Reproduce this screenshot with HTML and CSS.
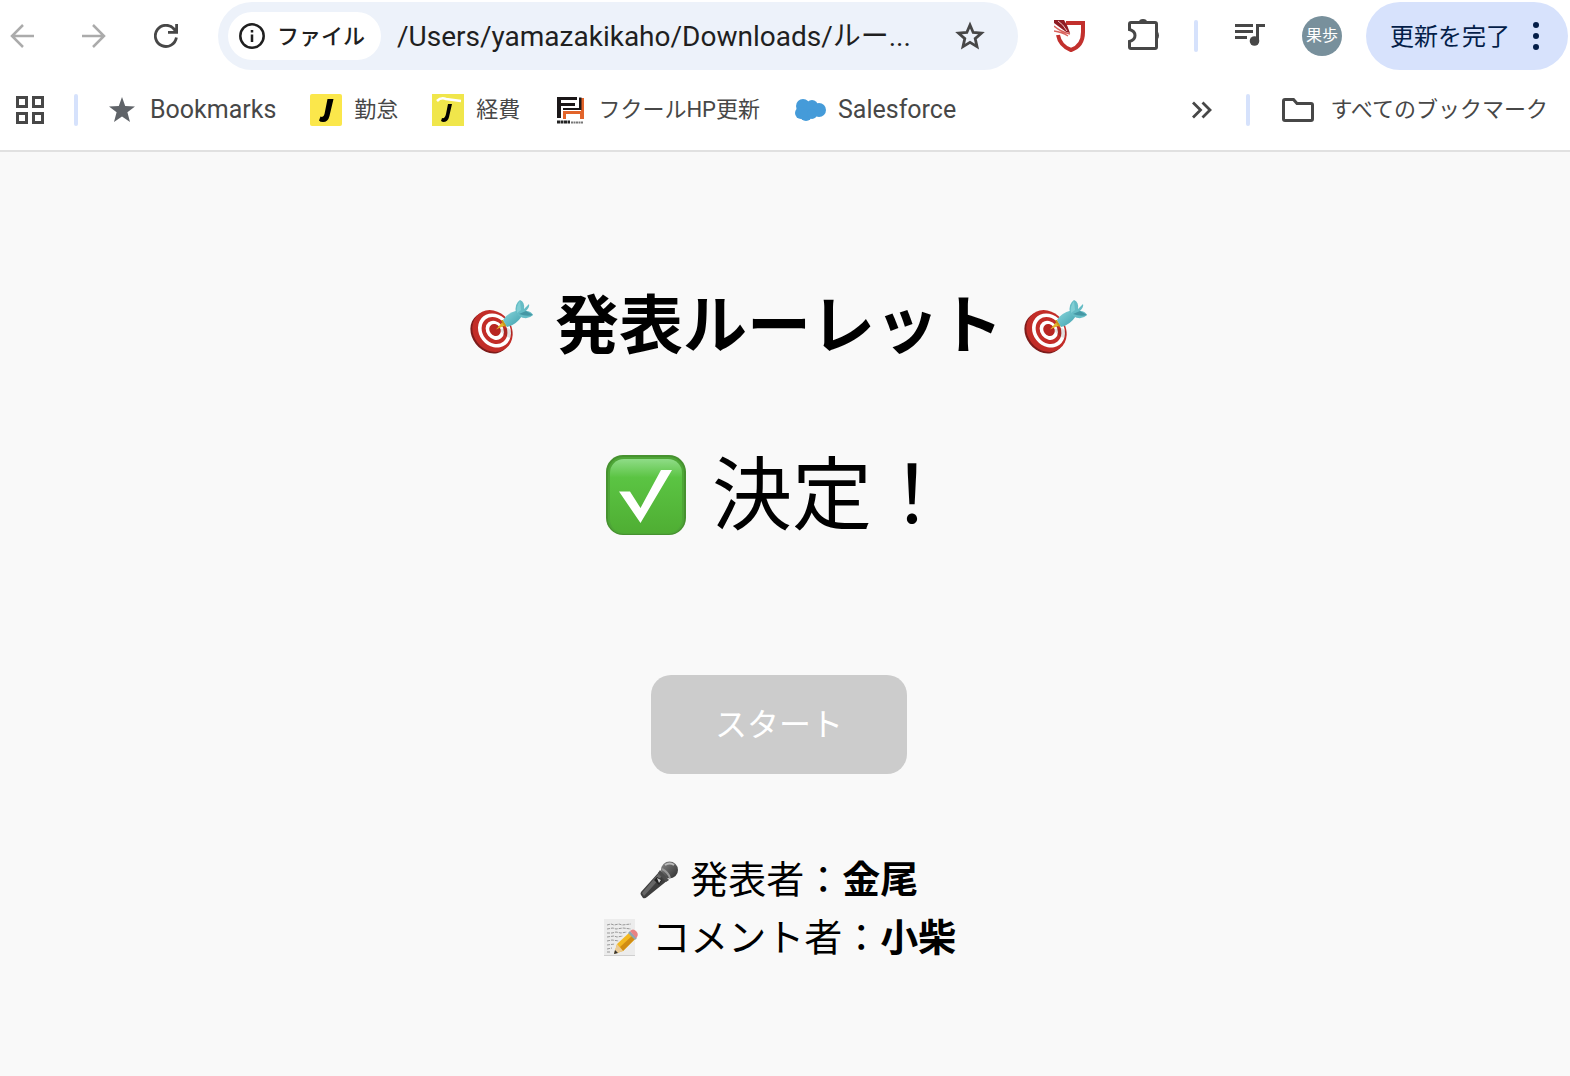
FILE: index.html
```html
<!DOCTYPE html>
<html lang="ja">
<head>
    <meta charset="UTF-8">
    <meta name="viewport" content="width=device-width, initial-scale=1.0">
    <title>発表ルーレット</title>
    <link rel="stylesheet" href="styles.css">
</head>
<body>
    <svg class="defs" aria-hidden="true">
        <defs>
            <linearGradient id="green" x1="0" y1="0" x2="0" y2="1">
                <stop offset="0" stop-color="#8fdc87"/>
                <stop offset="0.25" stop-color="#5bc443"/>
                <stop offset="1" stop-color="#4fae33"/>
            </linearGradient>
            <linearGradient id="metal" x1="0" y1="0" x2="1" y2="1">
                <stop offset="0" stop-color="#8a8a8a"/>
                <stop offset="1" stop-color="#2c2c2c"/>
            </linearGradient>
            <linearGradient id="dart" x1="0" y1="0" x2="1" y2="1">
                <stop offset="0" stop-color="#8ad6dc"/>
                <stop offset="1" stop-color="#3d9fac"/>
            </linearGradient>
            <symbol id="target" viewBox="0 0 64 64">
                <ellipse cx="20" cy="39" rx="18" ry="22" transform="rotate(-38 20 39)" fill="#7d1c1b"/>
                <ellipse cx="22.500" cy="37" rx="19" ry="22" transform="rotate(-38 22.500 37)" fill="#c22d28"/>
                <ellipse cx="24.500" cy="36.500" rx="15.500" ry="18" transform="rotate(-38 24.500 36.500)" fill="#fff"/>
                <ellipse cx="24.500" cy="36.500" rx="12" ry="14.200" transform="rotate(-38 24.500 36.500)" fill="#c22d28"/>
                <ellipse cx="24.800" cy="36.300" rx="8.500" ry="10.200" transform="rotate(-38 24.800 36.300)" fill="#fff"/>
                <ellipse cx="25" cy="36" rx="5.400" ry="6.400" transform="rotate(-38 25 36)" fill="#b82622"/>
                <path d="M29 35l9-1 5 4-3 6q-5-1-11-9z" fill="#000" opacity=".12"/>
                <path d="M26 35.500l6-7 3 3z" fill="#e2b52c"/>
                <path d="M31 26l2 0 4 6-2 1-2-3z" fill="#c99a1b"/>
                <path d="M33 26Q37 19 47 16.500L52 22Q46 31 37 33z" fill="url(#dart)"/>
                <path d="M46 19Q44 10 50 6q5 2 4 9l5-5q1 3-3 7 5 0 7 4-6 6-14 1z" fill="#65bcc5"/>
                <path d="M49 20l7-3 7 4q-6 2-14-1z" fill="#4597a4"/>
                <path d="M47 19q-1-7 3-12l1 9z" fill="#80ced4"/>
            </symbol>
            <symbol id="check" viewBox="0 0 80 80">
                <rect width="80" height="80" rx="17" fill="#46922f"/>
                <rect x="2" y="2" width="76" height="77" rx="15" fill="#4ea637"/>
                <rect x="4" y="4" width="72" height="74" rx="14" fill="url(#green)"/>
                <path d="M13 36.500H24L34.500 53 55 15H66L34.500 68z" fill="#fff"/>
            </symbol>
            <symbol id="mic" viewBox="0 0 38 38">
                <path d="M1 34Q0 33 1 31L19 11l9 8L7 36q-2 2-4 1z" fill="#3e3e3e"/>
                <path d="M2 32L19 12l3 3L4 35z" fill="#666"/>
                <path d="M14 19l3-3 5 3-3 5z" fill="#222"/>
                <path d="M17 17l4 2-2 3z" fill="#ccc"/>
                <circle cx="29.500" cy="9" r="8.500" fill="url(#metal)"/>
                <path d="M20 9l9 10-3 2-8-9z" fill="#4c4c4c"/>
                <path d="M22 8Q28 11 30 17" fill="none" stroke="#999" stroke-width="2"/>
                <path d="M25 4q5-3 9 0" fill="none" stroke="#bdbdbd" stroke-width="2"/>
            </symbol>
            <symbol id="memo" viewBox="0 0 38 38">
                <path d="M2 0H33V37H2z" fill="#cfcfcf"/>
                <path d="M2 0H33V36H2z" fill="#ececec"/>
                <path d="M5 6l4-1 3 1 5-1 3 1 9-1M5 10l6-1 3 1 7-1 8 1M5 14l5 0 4-1 5 1 6-1M5 18l7-1 3 1 6-1M5 22l5-1 7 1M5 26l8-1M5 30l5-1M5 33l4 0" fill="none" stroke="#999" stroke-dasharray="3 1"/>
                <path d="M12 35l3-10L28 13l6 6-13 13z" fill="#f2b822"/>
                <path d="M18 28L31 16l3 3-13 13z" fill="#d18d13"/>
                <path d="M12 35l3-10 6 7z" fill="#eacb98"/>
                <path d="M12 35l1-4 3 3z" fill="#333"/>
                <path d="M26 14l2-2 7 7-2 2z" fill="#8ea6b0"/>
                <path d="M28 12q3-3 6 0 3 3 1 6l-1 1z" fill="#e88283"/>
            </symbol>
        </defs>
    </svg>

    <header class="browser">
        <div class="toolbar">
            <nav class="nav">
                <button class="nav-btn" aria-label="戻る" disabled>
                    <svg width="24" height="24" viewBox="0 0 24 24" fill="none" stroke="#ababab" stroke-width="2.500"><path d="M24 12H2M13 1L2 12 13 23"/></svg>
                </button>
                <button class="nav-btn" aria-label="進む" disabled>
                    <svg width="24" height="24" viewBox="0 0 24 24" fill="none" stroke="#ababab" stroke-width="2.500"><path d="M0 12H22M11 1L22 12 11 23"/></svg>
                </button>
                <button class="nav-btn" aria-label="再読み込み">
                    <svg width="24" height="24" viewBox="0 0 24 24" fill="none" stroke="#474747" stroke-width="2.800"><path d="M22.400 13.500A10.600 10.600 0 1 1 20 5L22 8M22.600 0V8.400H14"/></svg>
                </button>
            </nav>

            <div class="omnibox">
                <button class="site-chip">
                    <svg width="26" height="26" viewBox="0 0 26 26" fill="none" stroke="#1f1f1f" stroke-width="2.500"><circle cx="13" cy="13" r="11.700"/><path d="M13 11.500V19M13 7V9.500"/></svg>
                    <span class="label">ファイル</span>
                </button>
                <input class="url" type="text" value="/Users/yamazakikaho/Downloads/ルー..." aria-label="アドレス" spellcheck="false">
                <button class="star-btn" aria-label="ブックマークに追加">
                    <svg width="30" height="30" viewBox="0 0 30 30" fill="none" stroke="#474747" stroke-width="2.800"><path d="M15 4L18.200 11.500 26.400 12.200 20.200 17.600 22 25.600 15 21.400 8 25.600 9.800 17.600 3.600 12.200 11.800 11.500z"/></svg>
                </button>
            </div>

            <div class="tools">
                <button class="tool-btn" aria-label="セキュリティ拡張機能">
                    <svg width="32" height="32" viewBox="0 0 32 32"><path d="M12 3H29V12Q29 26 17 30 6 26 4 15" fill="none" stroke="#c2302d" stroke-width="4"/><path d="M0 0H10Q14 6 16 13 11 12 8 9L0 3z" fill="#8f1d25"/><path d="M4 1Q9 4 13 11" fill="none" stroke="#f0c4c4"/><path d="M0 6Q7 12 16 14M0 11Q8 12 14 16" fill="none" stroke="#d9615b" stroke-width="1.500"/></svg>
                </button>
                <button class="tool-btn" aria-label="拡張機能">
                    <svg width="34" height="34" viewBox="-2 2 34 34"><path d="M4 5.500H28Q29.500 5.500 29.500 7V30Q29.500 31.500 28 31.500H4Q2.500 31.500 2.500 30V24.500Q8 23 8 18.500T2.500 12.500V7Q2.500 5.500 4 5.500z" fill="none" stroke="#474747" stroke-width="3"/><path d="M12 5Q12 2 16 2T20 5zM30 14Q32 15 32 18.500T30 23z" fill="#474747"/></svg>
                </button>
                <span class="divider"></span>
                <button class="tool-btn" aria-label="メディア">
                    <svg width="32" height="26" viewBox="0 0 32 26" fill="#474747"><path d="M1 1H19V4H1zM1 7H19V10H1zM1 13H13V16H1zM22 1H31V4H25V18H22z"/><circle cx="20.500" cy="18" r="4.800"/></svg>
                </button>
                <button class="tool-btn" aria-label="プロフィール"><span class="avatar">果歩</span></button>
            </div>

            <button class="update">
                <span class="label">更新を完了</span>
                <svg width="8" height="28" viewBox="0 0 8 28" fill="#041e49"><circle cx="4" cy="3" r="3"/><circle cx="4" cy="14" r="3"/><circle cx="4" cy="25" r="3"/></svg>
            </button>
        </div>

        <div class="bookmarks">
            <button class="apps" aria-label="アプリ">
                <svg width="28" height="28" viewBox="0 0 28 28" fill="none" stroke="#474747" stroke-width="3"><path d="M1.500 1.500H10.500V10.500H1.500zM17.500 1.500H26.500V10.500H17.500zM1.500 17.500H10.500V26.500H1.500zM17.500 17.500H26.500V26.500H17.500z"/></svg>
            </button>
            <span class="divider"></span>
            <div class="bookmark-list">
                <a class="bookmark latin" href="#">
                    <svg width="32" height="32" viewBox="0 0 32 32"><path d="M16 3L19.200 12 29 12.400 21.400 18.200 24 28 16 22.400 8 28 10.600 18.200 3 12.400 12.800 12z" fill="#5f6368"/></svg>
                    Bookmarks
                </a>
                <a class="bookmark" href="#">
                    <svg width="32" height="32" viewBox="0 0 32 32"><rect width="32" height="32" rx="2" fill="#fbe74b"/><path d="M17.500 5H23.500L19.500 22Q18 28 13 28 10 28 9 26.500L10.500 22.500Q13.500 24 14.500 20z" fill="#000"/></svg>
                    勤怠
                </a>
                <a class="bookmark" href="#">
                    <svg width="32" height="32" viewBox="0 0 32 32"><path d="M0 0H32V32H0z" fill="#f0e64b"/><path d="M5 7Q9 3 14 5L29 7" fill="none" stroke="#fff" stroke-width="2.500"/><path d="M16 10H20L17 23Q16 28 11 28L9 27 10 24Q13 25 14 20z" fill="#000"/></svg>
                    経費
                </a>
                <a class="bookmark" href="#">
                    <svg width="32" height="32" viewBox="0 0 32 32"><path d="M27 4H30V25H26V20H12V25H9V17H27z" fill="#e2642a"/><path d="M3 3H23V6H7V9H21V12H7V24H3z" fill="#1b1718"/><path d="M9 14H25V3.500H27.500V16H9z" fill="#1b1718"/><path d="M3 28H16" stroke="#222" stroke-width="3" stroke-dasharray="3 .5"/><path d="M17 28.500H29" stroke="#777" stroke-width="2" stroke-dasharray="2 .5"/></svg>
                    フクールHP更新
                </a>
                <a class="bookmark latin" href="#">
                    <svg width="32" height="32" viewBox="0 0 32 32" fill="#459bd9"><circle cx="9" cy="12" r="7"/><circle cx="18" cy="12" r="6"/><circle cx="25" cy="16" r="7"/><circle cx="7" cy="19" r="6"/><circle cx="12" cy="21" r="6"/><circle cx="18" cy="20" r="5"/></svg>
                    Salesforce
                </a>
            </div>
            <button class="more" aria-label="その他のブックマーク">
                <svg width="20" height="18" viewBox="0 0 20 18" fill="none" stroke="#474747" stroke-width="2.800"><path d="M1 1.500L8.500 9 1 16.500M10.500 1.500L18 9 10.500 16.500"/></svg>
            </button>
            <span class="divider"></span>
            <a class="bookmark all" href="#">
                <svg width="32" height="32" viewBox="0 0 32 32" fill="none" stroke="#474747" stroke-width="3"><path d="M3 5.500H11.500L15 9.500H29Q30.500 9.500 30.500 11V25Q30.500 26.500 29 26.500H3Q1.500 26.500 1.500 25V7Q1.500 5.500 3 5.500z"/></svg>
                すべてのブックマーク
            </a>
        </div>
    </header>

    <main class="page">
        <h1 class="title">
            <svg class="emoji" role="img" aria-label="的"><use href="#target"/></svg>
            発表ルーレット
            <svg class="emoji" role="img" aria-label="的"><use href="#target"/></svg>
        </h1>
        <div class="roulette">
            <svg class="emoji" role="img" aria-label="チェック"><use href="#check"/></svg>
            決定！
        </div>
        <button class="start" disabled>スタート</button>
        <div class="result">
            <p>
                <svg class="emoji" role="img" aria-label="マイク"><use href="#mic"/></svg>
                発表者：<strong>金尾</strong>
            </p>
            <p>
                <svg class="emoji" role="img" aria-label="メモ"><use href="#memo"/></svg>
                コメント者：<strong>小柴</strong>
            </p>
        </div>
    </main>
</body>
</html>
```
FILE: styles.css
```css
* {
    margin: 0;
    padding: 0;
    box-sizing: border-box;
}

body {
    font-family: Roboto, 'Noto Sans CJK JP', sans-serif;
    background: #f9f9f9;
    color: #000;
}

button {
    font: inherit;
    color: inherit;
    background: none;
    border: none;
}

svg {
    flex-shrink: 0;
}

.defs {
    position: absolute;
    width: 0;
    height: 0;
}

/* ブラウザ上部 */
.browser {
    background: #fff;
    border-bottom: 2px solid #e1e1e1;
}

.toolbar {
    display: flex;
    align-items: center;
    padding: 2px;
    padding-left: 0;
}

.nav {
    display: flex;
    gap: 28px;
    margin-right: 30px;
}

.nav-btn {
    display: flex;
    align-items: center;
    justify-content: center;
    width: 44px;
    height: 44px;
}

.omnibox {
    display: flex;
    align-items: center;
    flex: 1;
    min-width: 0;
    height: 68px;
    padding: 0 33px 0 10px;
    border-radius: 34px;
    background: #edf2fa;
}

.site-chip {
    display: flex;
    align-items: center;
    gap: 12px;
    height: 48px;
    padding: 0 16px 0 11px;
    border-radius: 24px;
    background: #fff;
    color: #1f1f1f;
    font-size: 22px;
    font-weight: 500;
    white-space: nowrap;
}

.label {
    padding-bottom: 4px;
}

.url {
    flex: 1;
    min-width: 0;
    height: 48px;
    margin: 0 16px;
    padding-bottom: 4px;
    border: none;
    outline: none;
    background: none;
    color: #1f1f1f;
    font-family: inherit;
    font-size: 28px;
}

.star-btn {
    display: flex;
}

.tools {
    display: flex;
    align-items: center;
    margin: 0 8px 0 16px;
}

.tool-btn {
    display: flex;
    align-items: center;
    justify-content: center;
    width: 72px;
    height: 48px;
}

.divider {
    flex-shrink: 0;
    width: 4px;
    height: 32px;
    margin: 0 16px;
    border-radius: 2px;
    background: #d6e2fc;
}

.avatar {
    width: 40px;
    height: 40px;
    border-radius: 50%;
    background: #78909c;
    color: #fff;
    font-size: 16px;
    line-height: 40px;
    text-align: center;
}

.update {
    display: flex;
    align-items: center;
    gap: 22px;
    height: 68px;
    padding: 0 28px 0 24px;
    border-radius: 34px;
    background: #d7e2fc;
    color: #041e49;
    font-size: 24px;
    white-space: nowrap;
}

/* ブックマークバー */
.bookmarks {
    display: flex;
    align-items: center;
    height: 78px;
    padding: 0 22px 2px 16px;
    color: #474747;
}

.bookmarks .divider {
    margin: 0 28px 0 30px;
}

.apps,
.more {
    display: flex;
}

.more {
    margin-right: 4px;
}

.bookmark-list {
    display: flex;
    flex: 1;
    gap: 34px;
    min-width: 0;
}

.bookmark {
    display: flex;
    align-items: center;
    gap: 12px;
    color: #474747;
    font-size: 22px;
    line-height: 32px;
    text-decoration: none;
    white-space: nowrap;
}

.bookmark.latin {
    font-size: 25px;
}

.bookmark.all {
    gap: 16px;
    margin-left: 4px;
}

/* ルーレット */
.page {
    padding: 120px 12px 100px 0;
    text-align: center;
    font-family: 'Noto Sans CJK JP', sans-serif;
}

.emoji {
    width: 1em;
    height: 1em;
    margin-right: 0.1em;
    vertical-align: -0.15em;
}

.title {
    font-size: 64px;
    line-height: 96px;
}

.title .emoji:last-child {
    margin: 0 0 0 0.1em;
}

.roulette {
    margin-top: 60px;
    font-size: 80px;
    line-height: 120px;
}

.start {
    margin-top: 127px;
    padding: 22px 64px 27px;
    border-radius: 20px;
    background: #ccc;
    color: #fff;
    font-size: 32px;
    line-height: 50px;
}

.result {
    margin-top: 74px;
    font-size: 38px;
    line-height: 58px;
}
```
